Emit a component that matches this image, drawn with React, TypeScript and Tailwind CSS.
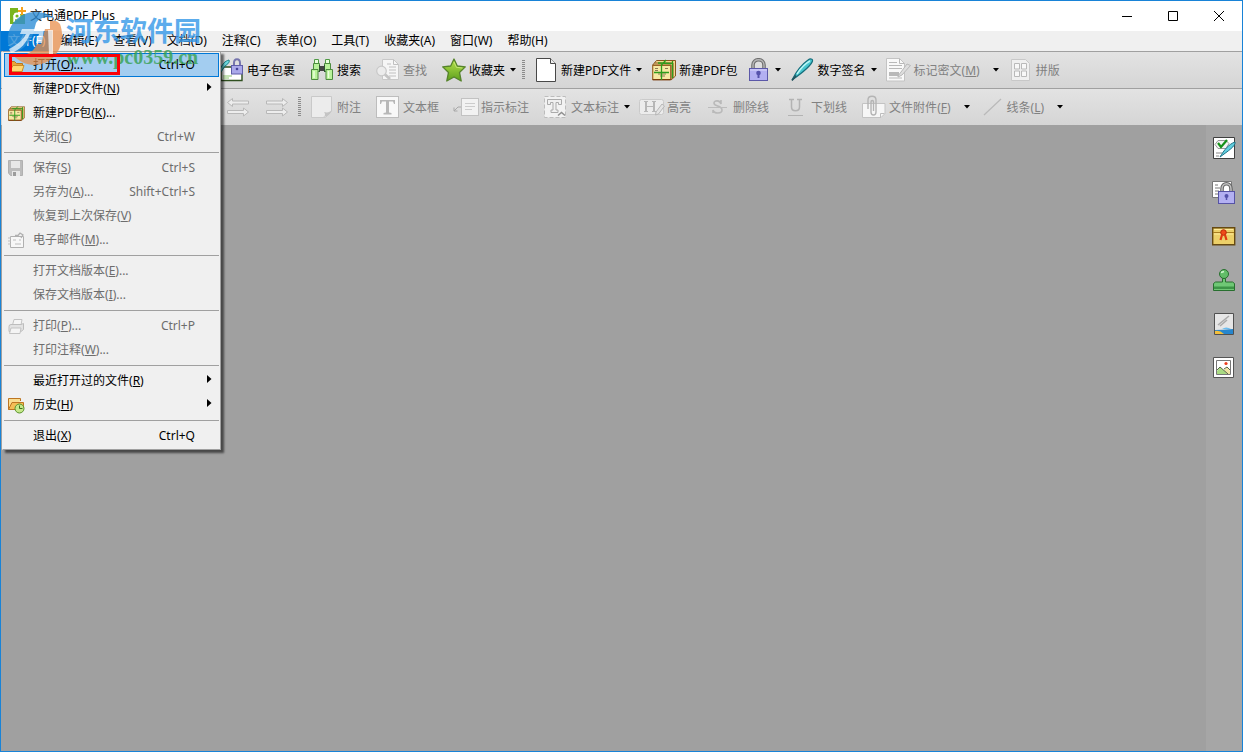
import type { ReactNode } from "react";

const GREY = "#b9b9b9";

function Svg({ children, w = 24, h = 24 }: { children: ReactNode; w?: number; h?: number }) {
  return (
    <svg width={w} height={h} viewBox={`0 0 ${w} ${h}`} fill="none" className="shrink-0" aria-hidden="true">
      {children}
    </svg>
  );
}

/* ---------- toolbar icons ---------- */

const EnvelopeLock = () => (
  <Svg>
    <path d="M1 9h21v13.500H1z" fill="#fff" stroke="#2f4f1f" strokeWidth="1.400" />
    <path d="M3 18h9M3 20h6" stroke="#8cc66b" />
    <path d="M14 8V5c0-5 6-5 6 0v3" stroke="#7675ad" strokeWidth="2" />
    <rect x="11.500" y="7.500" width="11" height="8.500" fill="#aaa8ea" stroke="#5f5da8" />
    <circle cx="17" cy="11" r="1.300" fill="#44429a" />
    <path d="M0 12C2 6 5 3 9 2c1 2-1 4-4 6l-4 6" fill="#6fd9de" stroke="#137f86" />
  </Svg>
);
const Binoculars = () => (
  <Svg>
    <path d="M9 8h6v5H9z" fill="#444" />
    <path d="M4.500 1.500h4v5h-4zM15.500 1.500h4v5h-4z" fill="#eaffdd" stroke="#4f9a45" />
    <path d="M3.500 5.500h6v8h-6zM14.500 5.500h6v8h-6z" fill="#b8f29a" stroke="#4d8b3f" />
    <path d="M1.500 11.500h6.500v10H1.500zM16 11.500h6.500v10H16z" fill="#b8f29a" stroke="#4d8b3f" />
    <path d="M4 13v7M18.500 13v7" stroke="#e9ffdc" strokeWidth="1.500" />
    <path d="M9.500 7v7M14.500 7v7" stroke="#2d5230" />
  </Svg>
);
const FindDoc = () => (
  <Svg>
    <path d="M6.500 1.500h11l5 5v15h-16z" fill="#f6f6f6" stroke="#c8c8c8" />
    <path d="M17.500 1.500v5h5M11 6h4M13 9h7M13 12h7M13 15h7M13 18h7" stroke="#c0c0c0" />
    <circle cx="5.500" cy="13" r="4.800" fill="#ececec" stroke="#c8c8c8" strokeWidth="1.200" />
    <path d="M9 16.500l5 4.500" stroke="#c4c4c4" strokeWidth="3" />
  </Svg>
);
const Star = () => (
  <Svg>
    <defs>
      <linearGradient id="star" x1="0" y1="0" x2="0" y2="1">
        <stop stopColor="#b7e34c" />
        <stop offset="1" stopColor="#5d9f1c" />
      </linearGradient>
    </defs>
    <path d="M12 1l3.300 7 8 .9-5.800 5.600 1.700 8.500L12 19l-7.200 4 1.700-8.500L.7 8.900l8-.9z" fill="url(#star)" stroke="#55832b" strokeWidth="1.300" strokeLinejoin="round" />
    <path d="M12 4l2.400 5.300 6 .7" stroke="#d4f08a" opacity=".7" />
  </Svg>
);
const BlankDoc = () => (
  <Svg>
    <path d="M2.500.5h14l5 5v18h-19z" fill="#fff" stroke="#484848" />
    <path d="M16.500.5v5h5" fill="#eee" stroke="#484848" />
  </Svg>
);
const Parcel = ({ small = false }: { small?: boolean }) => (
  <svg width={small ? 17 : 24} height={small ? 17 : 24} viewBox="0 0 24 24" fill="none" aria-hidden="true" className="shrink-0">
    <path d="M4.500 2.500h19v15.500l-4.500 4V7H.7z" fill="#f0dc90" stroke="#8a5420" />
    <path d="M2.500 5h18.500v15" stroke="#8d531a" />
    <path d="M.700 7.500h18v14H.7z" fill="#f7e9a4" stroke="#9a6426" strokeWidth="1.200" />
    <path d="M.7 21.700h18" stroke="#7a3b0b" strokeWidth="1.400" />
    <path d="M3 10.500h3M3 12.500h3M13 10.500h3M6 16h8M8 18h5" stroke="#8d7b54" />
    <path d="M9.500 22V7l4.500-5M6 5l14 .5M20.500 3v17M2 14.500h15" stroke="#2d9c1c" strokeWidth="1.300" />
  </svg>
);
const Lock = () => (
  <Svg>
    <path d="M7 12V7c0-7 11-7 11 0v5" stroke="#6f6f6f" strokeWidth="3.600" />
    <path d="M7 12V7c0-7 11-7 11 0v5" stroke="#b7b7b7" strokeWidth="1.400" />
    <rect x="3.500" y="10.500" width="18" height="12" fill="#b3b0f2" stroke="#5b58a8" />
    <path d="M4 12h17" stroke="#dad8fc" />
    <circle cx="12.500" cy="15" r="2.300" fill="#5653ac" />
    <path d="M12.500 15v5" stroke="#5653ac" strokeWidth="2" />
  </Svg>
);
const Quill = () => (
  <Svg>
    <path d="M1 22C5 14 10 7 17 2c2-1.500 5-1.500 4.500 1C20 8 11 15 1 22z" fill="#48c6cf" stroke="#166e7c" strokeWidth="1.200" />
    <path d="M6 16C10 10 15 5 19 3" stroke="#b9f6f5" strokeWidth="1.500" />
    <path d="M1 22.500l4-5" stroke="#27515c" strokeWidth="1.500" />
  </Svg>
);
const Redact = () => (
  <Svg w={26}>
    <path d="M.5 .5h13l5 5v17.500H.5z" fill="#f9f9f9" stroke="#c3c3c3" />
    <path d="M13.500.5v5h5M3 4.500h8M3 7.500h13M3 10.500h13M3 20h13" stroke={GREY} />
    <path d="M3 14h10v4H3z" fill="#b9b9b9" />
    <path d="M12 18l9-12 3.500 1.500L16 17l-4 2z" fill="#dedede" stroke="#b8b8b8" />
  </Svg>
);
const Impose = () => (
  <Svg>
    <path d="M2.500 1.500h14l4 4v17h-18z" fill="#f0f0f0" stroke="#c8c8c8" />
    <path d="M5.500 5.500h5v5.500h-5zM12.500 5.500h5v5.500h-5zM5.500 13h5v5.500h-5zM12.500 13h5v5.500h-5z" fill="#f8f8f8" stroke={GREY} />
  </Svg>
);
const Undo = ({ flip = false }: { flip?: boolean }) => (
  <Svg>
    <g fill="#ededed" stroke="#b8b8b8" strokeLinejoin="round">
      <path d={flip ? "M1.500 6h16V3.500l5 4-5 4V9h-16z" : "M22.500 6h-16V3.500l-5 4 5 4V9h16z"} />
      <path d="M1.500 15.500h16V13l5 4-5 4v-2.500h-16z" />
    </g>
  </Svg>
);
const Note = () => (
  <Svg>
    <path d="M1.500 1.500h20v15l-6 6h-14z" fill="#ececec" stroke="#c9c9c9" />
    <path d="M13 22c3-1 2-4 1-5 4 1 6 0 7.500-2-1 4-4 7-8.500 7z" fill="#c4c4c4" />
  </Svg>
);
const TextBox = () => (
  <Svg>
    <rect x=".5" y="1.500" width="22" height="21" fill="#f8f8f8" stroke="#bdbdbd" />
    <path d="M4 9V5h15v4h-1l-1-2.500h-4V17.500l2.500.5v1.500H7.500V18l2.500-.5V6.500H6L5 9z" fill="#b8b8b8" />
  </Svg>
);
const Callout = () => (
  <Svg w={26}>
    <path d="M1 16l4-4h3M1 12.500V16h3.500" stroke="#a8a8a8" />
    <rect x="8.500" y="3.500" width="17" height="17" fill="#f2f2f2" stroke="#c2c2c2" />
    <path d="M12 8.500h10M12 11.500h10M12 14.500h7" stroke="#ccc" />
  </Svg>
);
const TextMark = () => (
  <Svg>
    <rect x=".5" y="1.500" width="21" height="21" fill="#f2f2f2" stroke="#bcbcbc" strokeDasharray="4 2" />
    <path d="M3.500 9.500v-5h14v5h-3V7.500h-2.500V15h2v2.500H7V15h2V7.500H6.500v2z" fill="#f0f0f0" stroke="#ababab" />
    <path d="M14 20.500l3.500-3 3.500 3" stroke="#8f8f8f" strokeWidth="1.500" />
  </Svg>
);
const Highlight = () => (
  <Svg w={26}>
    <rect x=".5" y="4.500" width="24" height="15" rx="2" fill="#ececec" stroke="#cacaca" />
    <path d="M5 6h4v1H8v4h6V7h-1V6h4v1h-1v9h1v1h-4v-1h1v-4H8v4h1v1H5v-1h1V7H5z" fill="#b7b7b7" />
    <path d="M17 17l6-8 2.500 2-6 8-3 1z" fill="#e4e4e4" stroke="#b7b7b7" />
  </Svg>
);
const Strike = () => (
  <Svg>
    <path d="M15 5v4c-1-4-7-4-7-1 0 4 8 2 8 7 0 4-8 4-9 0v3" stroke="#b9b9b9" strokeWidth="1.600" />
    <path d="M2 12.500h19" stroke="#bcbcbc" />
  </Svg>
);
const Underline = () => (
  <Svg>
    <path d="M5 4.500h5M13 4.500h5M7.500 4v8c0 5 8 5 8 0V4" stroke="#b3b3b3" strokeWidth="1.500" />
    <path d="M4 20.500h15" stroke="#b3b3b3" />
  </Svg>
);
const Clip = () => (
  <Svg>
    <path d="M.5 8.500h22.500v10l-4 4H.5z" fill="#f6f6f6" stroke="#c3c3c3" />
    <path d="M18.500 22.500v-4h4" stroke="#bdbdbd" />
    <path d="M6 14V5c0-5 8-5 8 0v12c0 4-5 4-5 0V7c0-2 2.500-2 2.500 0v9" stroke="#b4b4b4" strokeWidth="1.400" />
  </Svg>
);
const Line = () => (
  <Svg>
    <path d="M4 20L21 4" stroke="#b9b9b9" strokeWidth="1.200" />
  </Svg>
);

/* ---------- toolbar parts ---------- */

const Arrow = () => (
  <svg width="16" height="4" viewBox="0 0 16 4" className="shrink-0" aria-hidden="true">
    <path d="M5 0h6L8 3.500z" fill="#000" />
  </svg>
);

const Grip = () => (
  <svg width="4" height="20" viewBox="0 0 4 20" className="shrink-0" aria-hidden="true">
    {[0, 2, 4, 6, 8, 10, 12, 14, 16, 18].map((y) => (
      <path key={y} d={`M0 ${y}h3v1H0z`} fill="#8b8b8b" />
    ))}
  </svg>
);

type ToolProps = {
  icon: ReactNode;
  label?: string;
  mnemonic?: string;
  name?: string;
  disabled?: boolean;
  menu?: boolean;
  tight?: boolean;
};

function Tool({ icon, label, mnemonic, name, disabled, menu, tight }: ToolProps) {
  return (
    <button
      type="button"
      disabled={disabled}
      aria-label={name}
      className={`flex shrink-0 items-center whitespace-nowrap ${menu ? "mr-[5px]" : tight ? "mr-2" : "mr-[15px]"} ${disabled ? "text-[#818181]" : "text-black"}`}
    >
      <span className="flex w-6 justify-center">{icon}</span>
      {label && (
        <span className="ml-[3px] pt-[2px]">
          {label}
          {mnemonic && (
            <>
              (<u>{mnemonic}</u>)
            </>
          )}
        </span>
      )}
      {menu && (
        <span className={mnemonic ? "ml-2" : ""}>
          <Arrow />
        </span>
      )}
    </button>
  );
}

/* ---------- file menu ---------- */

const OpenIcon = () => (
  <Svg w={17} h={17}>
    <path d="M1.500 14V4.500h5l2 2h6V14z" fill="#e9a53a" stroke="#b9781f" />
    <path d="M1.500 14.500L5 8.500h11L14 14.500z" fill="#ffd873" stroke="#c98d2b" />
  </Svg>
);
const SaveIcon = () => (
  <Svg w={17} h={17}>
    <path d="M.5.5h14v15H2.500L.5 13z" fill="#bcbcbc" stroke="#b0b0b0" />
    <path d="M3 1h9v7H3zM4 11h8v5H4z" fill="#e8e8e8" />
    <path d="M5 12h3v4H5z" fill="#9c9c9c" />
  </Svg>
);
const MailIcon = () => (
  <Svg w={17} h={17}>
    <path d="M2.500 4.500h13v11h-13z" fill="#f7f7f7" stroke="#b0b0b0" />
    <path d="M0 6h3M0 9h3M0 12h3M5 8h3M11 8h2M7 12h6" stroke="#bdbdbd" />
    <path d="M7 3.500h3l2-2.500 3 2-2 3" stroke="#b0b0b0" strokeWidth="1.300" />
  </Svg>
);
const PrintIcon = () => (
  <Svg w={17} h={17}>
    <path d="M4.500 7l1.500-5.500h8L13 7" fill="#f5f5f5" stroke="#c3c3c3" />
    <path d="M1 8.500Q1 6.500 3 6.500h10l2.500-1v6l-2.500 2H1z" fill="#e2e2e2" stroke="#bdbdbd" />
    <path d="M3 10h10l-1 5.500H1.500z" fill="#f4f4f4" stroke="#c3c3c3" />
  </Svg>
);
const HistoryIcon = () => (
  <Svg w={17} h={17}>
    <path d="M.5 12.500V1.500h12V4" fill="#f9dc8f" stroke="#bd7521" />
    <path d="M.5 12.500L4 5.500h11.500v6l-2 1z" fill="#f4bd55" stroke="#bd7521" />
    <circle cx="11.500" cy="11.500" r="4.500" fill="#c5e88a" stroke="#57902a" />
    <path d="M11.500 8.500v3h3" stroke="#3c711c" />
  </Svg>
);

type Entry = { icon?: ReactNode; text: string; key: string; dots?: boolean; hint?: string; off?: boolean; sub?: boolean; active?: boolean };

const groups: Entry[][] = [
  [
    { icon: <OpenIcon />, text: "打开", key: "O", dots: true, hint: "Ctrl+O", active: true },
    { text: "新建PDF文件", key: "N", sub: true },
    { icon: <Parcel small />, text: "新建PDF包", key: "K", dots: true },
    { text: "关闭", key: "C", hint: "Ctrl+W", off: true },
  ],
  [
    { icon: <SaveIcon />, text: "保存", key: "S", hint: "Ctrl+S", off: true },
    { text: "另存为", key: "A", dots: true, hint: "Shift+Ctrl+S", off: true },
    { text: "恢复到上次保存", key: "V", off: true },
    { icon: <MailIcon />, text: "电子邮件", key: "M", dots: true, off: true },
  ],
  [
    { text: "打开文档版本", key: "E", dots: true, off: true },
    { text: "保存文档版本", key: "I", dots: true, off: true },
  ],
  [
    { icon: <PrintIcon />, text: "打印", key: "P", dots: true, hint: "Ctrl+P", off: true },
    { text: "打印注释", key: "W", dots: true, off: true },
  ],
  [
    { text: "最近打开过的文件", key: "R", sub: true },
    { icon: <HistoryIcon />, text: "历史", key: "H", sub: true },
  ],
  [{ text: "退出", key: "X", hint: "Ctrl+Q" }],
];

function FileMenu() {
  return (
    <div role="menu" className="absolute top-full left-0 z-10 ml-px w-[219px] border border-[#a0a0a0] border-l-[#f0f0f0] bg-[#f0f0f0] p-px shadow-[3px_3px_2px_rgba(0,0,0,0.55)]">
      {groups.map((group, i) => (
        <div key={i} role="group" className={i ? "mt-[3px] border-t border-[#a0a0a0] pt-[3px]" : ""}>
          {group.map((e) => (
            <button
              key={e.key}
              type="button"
              role="menuitem"
              disabled={e.off}
              className={`flex h-6 w-full items-center border pr-[6px] pl-[3px] text-left whitespace-nowrap ${e.active ? "border-[#0078d7] bg-[#a3cdf0]" : "border-transparent"} ${e.off ? "text-[#6d6d6d]" : "text-black"}`}
            >
              <span className="flex w-[25px]">{e.icon}</span>
              <span className="flex-1">
                {e.text}(<u>{e.key}</u>){e.dots && "..."}
              </span>
              {e.hint && <span className="mr-[17px]">{e.hint}</span>}
              {e.sub && (
                <svg width="5" height="8" viewBox="0 0 5 8" className="mb-1" aria-hidden="true">
                  <path d="M0 0l4.500 4L0 8z" fill="#000" />
                </svg>
              )}
            </button>
          ))}
        </div>
      ))}
    </div>
  );
}

const menus = [
  ["编辑", "E"],
  ["查看", "V"],
  ["文档", "D"],
  ["注释", "C"],
  ["表单", "O"],
  ["工具", "T"],
  ["收藏夹", "A"],
  ["窗口", "W"],
  ["帮助", "H"],
];

/* ---------- side panel icons ---------- */

const sideIcons: [string, ReactNode][] = [
  [
    "签名",
    <Svg>
      <path d="M1.500 1.500h21v21h-21z" fill="#fff" stroke="#3f3f3f" />
      <path d="M6 4.500h8l3 3-3 5H6l-3-4z" fill="#f3f3f3" stroke="#999" />
      <path d="M6 7l3 4 6-7" stroke="#159018" strokeWidth="2.200" />
      <path d="M8 21C12 14 17 8 23 6c1 4-7 9-15 15z" fill="#62cfdf" stroke="#1c7186" />
      <path d="M4 17h6M4 20h3" stroke="#888" />
    </Svg>,
  ],
  [
    "安全",
    <Svg>
      <path d="M.5 1.500h19v16H.5z" fill="#fff" stroke="#777" />
      <path d="M3 5h3M3 8h5M3 11h4M3 14h4" stroke="#777" />
      <path d="M10 12V9c0-7 9-7 9 0v3" stroke="#666" strokeWidth="3.600" />
      <path d="M10 12V9c0-7 9-7 9 0v3" stroke="#c4c4c4" strokeWidth="1.400" />
      <rect x="6.500" y="11.500" width="16" height="12" fill="#b3b0f2" stroke="#5653a5" />
      <circle cx="14.500" cy="16" r="2" fill="#5452aa" />
      <path d="M14.500 16v4" stroke="#5452aa" strokeWidth="1.500" />
    </Svg>,
  ],
  [
    "证书",
    <Svg>
      <path d="M.700 3.700h22v17H.7z" fill="#ecd069" stroke="#664a12" strokeWidth="1.400" />
      <path d="M1 8.500h21" stroke="#a77c20" />
      <path d="M2 5.500h19M2 10h19" stroke="#ffeb9b" />
      <circle cx="11.500" cy="8.500" r="2.800" fill="#ef4b19" stroke="#b92b0a" />
      <path d="M10 11l-1.500 5M13 11l1.500 5" stroke="#df3911" strokeWidth="2.200" />
    </Svg>,
  ],
  [
    "图章",
    <Svg>
      <circle cx="12" cy="6" r="4.500" fill="#62bd68" stroke="#286f2f" />
      <path d="M10.500 10.500h3V14h7l2 1.500v7h-21v-7l2-1.500h7z" fill="#6fc775" stroke="#286f2f" />
      <path d="M2 18.500h20V21H2z" fill="#3d9447" />
      <path d="M9 4.500l3-1" stroke="#d2f7cf" strokeWidth="1.500" />
    </Svg>,
  ],
  [
    "背景",
    <Svg>
      <path d="M2.500 1.500h19v21h-19z" fill="#e6e6e6" stroke="#505050" />
      <path d="M3 18q8 0 18-1v5H3z" fill="#2686cd" />
      <path d="M3 19q5-1 9 3H3z" fill="#f4bf3c" />
      <path d="M10 17q4-3 9 0" fill="#6abdf0" />
      <path d="M6 13L17 4M8 14l7-6" stroke="#aaa" strokeWidth="1.600" />
    </Svg>,
  ],
  [
    "图像",
    <Svg>
      <path d="M1.500 1.500h20v20h-20z" fill="#fff" stroke="#555" />
      <path d="M4.500 4.500h14v14h-14z" fill="#fff" stroke="#777" />
      <path d="M5 15l3-4 8 7H5z" fill="#a9db83" />
      <path d="M12 14l3-3 3 4v3h-3z" fill="#efe4a4" />
      <path d="M5 14l3-3 8 7M12 13l3-2 3 3" stroke="#57664a" />
      <circle cx="14" cy="7.500" r="1.600" fill="#ed3d1e" />
    </Svg>,
  ],
];

function Watermark() {
  return (
    <div className="pointer-events-none absolute top-[11px] left-[6px] z-20 flex items-start gap-px" aria-hidden="true">
      <svg width="58" height="54" viewBox="0 0 58 54" fill="none">
        <path d="M1 31C-1 14 12 0 28 0c8 0 14 2 19 6-8-2-15 0-18 5l-3 11c-3 8-8 14-17 18-4-2-7-5-8-9z" fill="#2f8fd6" opacity=".8" />
        <path d="M53 12c7 19-4 40-25 41-9 0-17-4-22-10 12 2 20-2 24-11h4l4-15h5V9c5-1 8 0 10 3z" fill="#e88f4c" opacity=".75" />
        <path d="M15 17h19l4-7-3 21h-6l3-9h-9C18 33 13 38 4 41l-2-4c8-4 14-9 17-15h-6z" fill="#fff" opacity=".7" />
        <path d="M41 18h5v24h-4z" fill="#fff" opacity=".7" />
      </svg>
      <div className="flex flex-col">
        <span className="font-['Noto_Sans_CJK_SC',sans-serif] text-[27px] leading-[36px] font-bold text-[#3498e8] opacity-80">河东软件园</span>
        <span className="font-['Liberation_Serif',serif] text-[20px] leading-[18px] font-bold text-[#36a152] opacity-80">www.pc0359.cn</span>
      </div>
    </div>
  );
}

export default function App() {
  return (
    <div className="relative flex min-h-screen flex-col overflow-hidden border border-[#1883d7] bg-[#a0a0a0] font-['Noto_Sans','Noto_Sans_CJK_SC',sans-serif] text-[12px] leading-[18px] text-black">
      <header className="flex h-[30px] items-center bg-white pl-2">
        <Svg w={18} h={18}>
          <path d="M1 1h8v6h7v10H1z" fill="#7ab51d" />
          <circle cx="8" cy="9" r="2.500" stroke="#fff" strokeWidth="1.800" />
          <path d="M5.200 8v7" stroke="#fff" strokeWidth="1.800" />
          <path d="M13 0v8M9 4h8" stroke="#f6a21b" strokeWidth="2" />
        </Svg>
        <h1 className="ml-[3px] flex-1">文电通PDF Plus</h1>
        <button type="button" aria-label="最小化" className="flex h-full w-[46px] items-center justify-center">
          <Svg w={10} h={10}><path d="M0 5.500h10" stroke="#000" /></Svg>
        </button>
        <button type="button" aria-label="最大化" className="flex h-full w-[46px] items-center justify-center">
          <Svg w={10} h={10}><path d="M.5.5h9v9h-9z" stroke="#000" /></Svg>
        </button>
        <button type="button" aria-label="关闭" className="flex h-full w-[46px] items-center justify-center">
          <Svg w={10} h={10}><path d="M0 0l10 10M10 0L0 10" stroke="#000" /></Svg>
        </button>
      </header>

      <nav className="relative flex h-5 items-center bg-[#f0f0f0]">
        <button type="button" aria-expanded="true" className="h-5 bg-[#0078d7] px-[7px] whitespace-nowrap text-white">文件(F)</button>
        {menus.map(([text, key]) => (
          <button key={key} type="button" className="h-5 pr-[7px] pl-2 whitespace-nowrap">
            {text}({key})
          </button>
        ))}
        <FileMenu />
      </nav>

      <div role="toolbar" className="flex h-[37px] items-center border-t border-[#a0a0a0] bg-gradient-to-b from-[#e3e3e3] to-[#d5d5d5] pl-[219px]">
        <Tool icon={<EnvelopeLock />} label="电子包裹" />
        <Tool icon={<Binoculars />} label="搜索" />
        <Tool icon={<FindDoc />} label="查找" disabled />
        <Tool icon={<Star />} label="收藏夹" menu />
        <span className="-ml-1 mr-2"><Grip /></span>
        <Tool icon={<BlankDoc />} label="新建PDF文件" menu />
        <Tool icon={<Parcel />} label="新建PDF包" tight />
        <Tool icon={<Lock />} name="加密" menu />
        <Tool icon={<Quill />} label="数字签名" menu />
        <Tool icon={<Redact />} label="标记密文" mnemonic="M" disabled menu />
        <Tool icon={<Impose />} label="拼版" disabled />
      </div>

      <div role="toolbar" className="flex h-[37px] items-center border-t border-[#a0a0a0] bg-gradient-to-b from-[#e3e3e3] to-[#d5d5d5] pl-[225px]">
        <Tool icon={<Undo />} name="撤销" disabled />
        <Tool icon={<Undo flip />} name="重做" disabled />
        <span className="-ml-[6px] mr-2"><Grip /></span>
        <Tool icon={<Note />} label="附注" disabled />
        <Tool icon={<TextBox />} label="文本框" disabled />
        <Tool icon={<Callout />} label="指示标注" disabled />
        <Tool icon={<TextMark />} label="文本标注" disabled menu />
        <Tool icon={<Highlight />} label="高亮" disabled />
        <Tool icon={<Strike />} label="删除线" disabled />
        <Tool icon={<Underline />} label="下划线" disabled />
        <Tool icon={<Clip />} label="文件附件" mnemonic="F" disabled menu />
        <Tool icon={<Line />} label="线条" mnemonic="L" disabled menu />
      </div>

      <main className="flex flex-1 justify-end">
        <aside className="flex w-9 flex-col items-center gap-5 bg-[#a6a6a6] pt-[11px]">
          {sideIcons.map(([name, icon]) => (
            <button key={name} type="button" aria-label={name}>{icon}</button>
          ))}
        </aside>
      </main>

      <div className="pointer-events-none absolute top-[53px] left-[8px] z-30 h-[21px] w-[111px] border-3 border-[#fb0007]" />
      <Watermark />
    </div>
  );
}
